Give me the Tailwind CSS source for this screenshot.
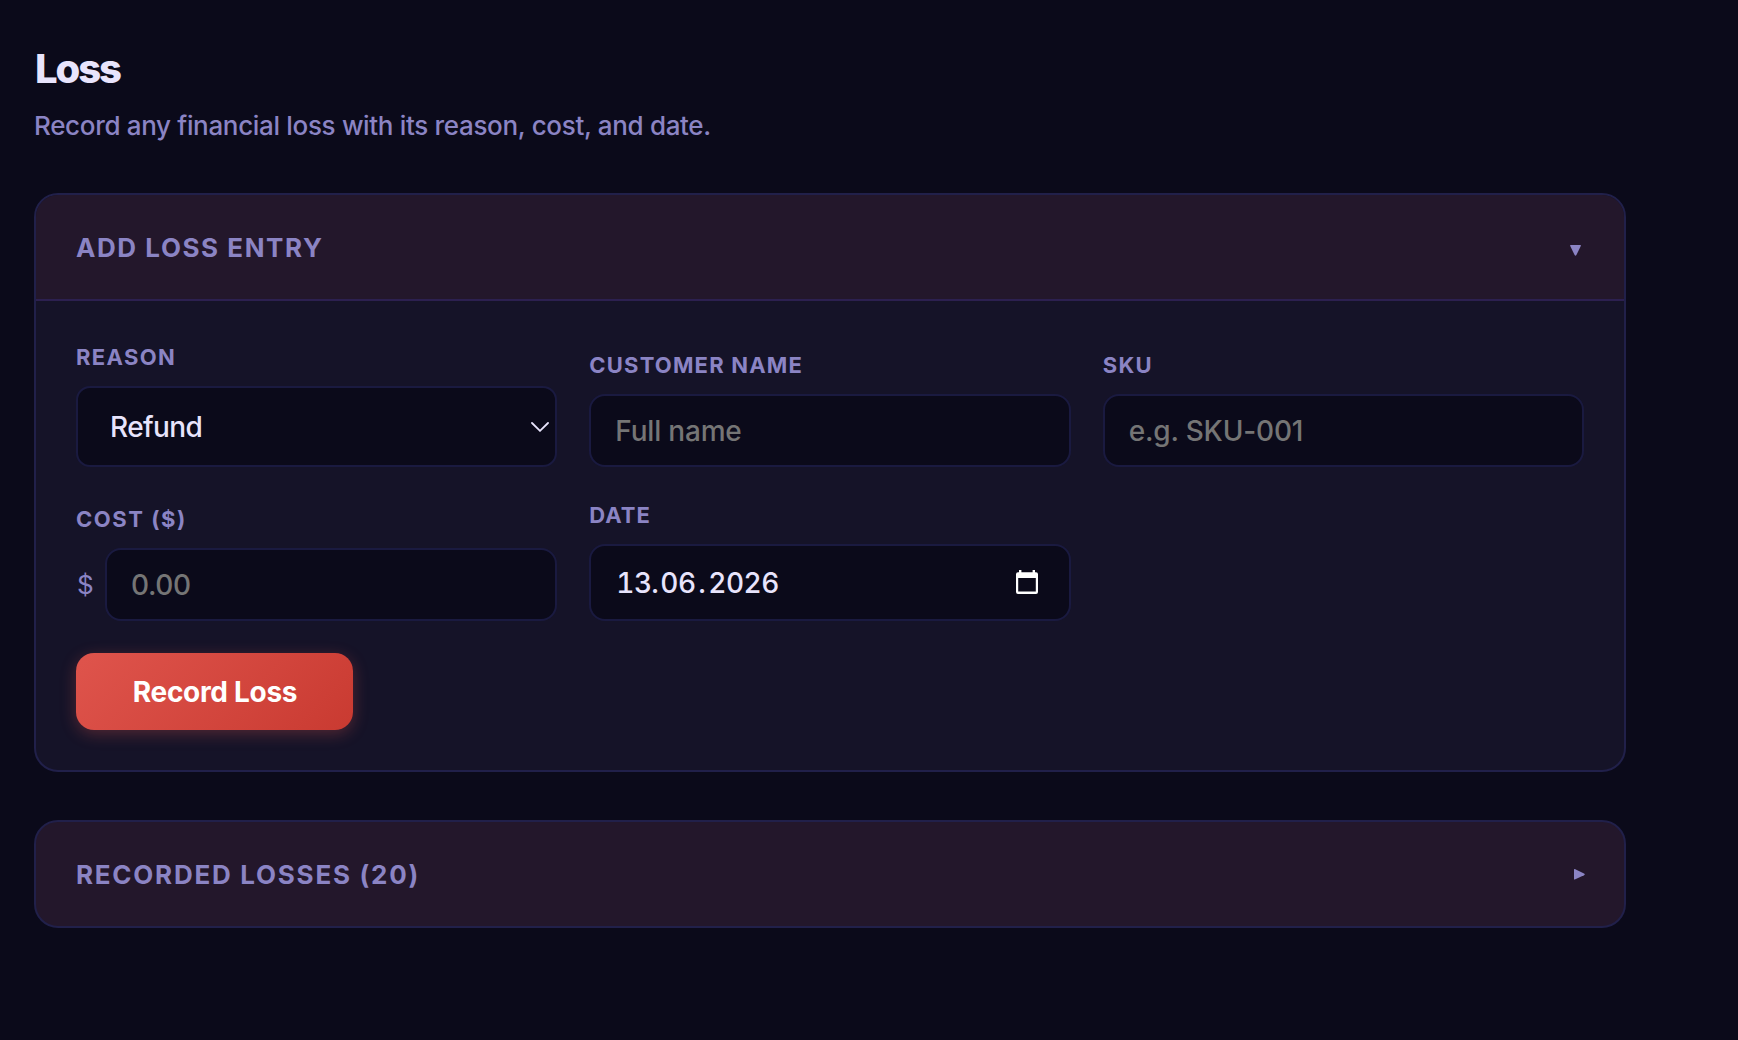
<!DOCTYPE html>
<html lang="en">
<head>
<meta charset="utf-8">
<title>Loss</title>
<script src="https://cdn.jsdelivr.net/npm/@tailwindcss/browser@4"></script>
</head>
<body class="min-h-screen bg-[#0b0a1a] font-['Inter',sans-serif] text-[#e8e4fc] antialiased">
<main class="w-[1626px] pl-[34px] pt-11">
  <h1 class="pl-px text-[40px] leading-[49px] font-extrabold tracking-[-2.1px]">Loss</h1>
  <p class="mt-3.5 mb-[49px] text-[26px] leading-[37px] font-medium tracking-[-0.33px] text-[#8b84c4]">Record any financial loss with its reason, cost, and date.</p>

  <section class="mb-12 overflow-hidden rounded-3xl border-2 border-[#21204a] bg-[#151328]">
    <header class="flex h-[106px] items-center justify-between border-b-2 border-[#2c2050] bg-[#23172b] pl-10 pr-[43px]">
      <h2 class="text-[26px] font-bold tracking-[1.56px] text-[#8b84c4]">ADD LOSS ENTRY</h2>
      <svg class="mt-1.5 h-[11px] w-[11px] fill-[#8b84c4]" viewBox="0 0 11 11"><path d="M.6 0h9.8q.8 0 .5.8L6.4 10q-.9 1.4-1.8 0L.1.8Q-.2 0 .6 0z"/></svg>
    </header>
    <form class="p-10">
      <div class="grid grid-cols-3 items-end gap-8">
        <div>
          <label class="mb-[13px] block text-[22px] leading-8 font-bold tracking-[1.35px] text-[#8b84c4]">REASON</label>
          <div class="flex h-[81px] items-center justify-between rounded-[14px] border-2 border-[#1a1a40] bg-[#0b0a1a] pl-8 pr-[6px]">
            <span class="text-[28px] font-medium tracking-[-0.6px]">Refund</span>
            <svg class="h-[10px] w-[18px] fill-none stroke-[#e8e4fc] stroke-[1.8]" viewBox="0 0 18 10"><path d="M1 1l8 7.8L17 1" stroke-linecap="round"/></svg>
          </div>
        </div>
        <div>
          <label class="mb-[13px] block text-[22px] leading-8 font-bold tracking-[1.18px] text-[#8b84c4]">CUSTOMER NAME</label>
          <input type="text" placeholder="Full name" class="block h-[73px] w-full rounded-[16px] border-2 border-[#1a1a40] bg-[#0b0a1a] px-6 text-[28px] font-medium tracking-[-0.2px] placeholder:text-[#757575]">
        </div>
        <div>
          <label class="mb-[13px] block text-[22px] leading-8 font-bold tracking-[1.35px] text-[#8b84c4]">SKU</label>
          <input type="text" placeholder="e.g. SKU-001" class="block h-[73px] w-full rounded-[16px] border-2 border-[#1a1a40] bg-[#0b0a1a] px-6 text-[28px] font-medium tracking-[-0.18px] placeholder:text-[#757575]">
        </div>
        <div>
          <label class="mb-[13px] block text-[22px] leading-8 font-bold tracking-[1.54px] text-[#8b84c4]">COST ($)</label>
          <div class="flex items-center">
            <span class="w-[29px] shrink-0 pl-px text-[26px] text-[#8b84c4]">$</span>
            <input type="text" placeholder="0.00" class="block h-[73px] w-full min-w-0 rounded-[16px] border-2 border-[#1a1a40] bg-[#0b0a1a] px-6 text-[28px] font-medium tracking-[-0.4px] placeholder:text-[#757575]">
          </div>
        </div>
        <div>
          <label class="mb-[13px] block text-[22px] leading-8 font-bold tracking-[1px] text-[#8b84c4]">DATE</label>
          <div class="flex h-[77px] items-center justify-between rounded-[16px] border-2 border-[#1a1a40] bg-[#0b0a1a] pl-[25px] pr-[31px]">
            <span class="flex text-[28px] font-medium tabular-nums tracking-[-0.5px]"><span class="w-[35px]">13</span><span class="w-[9px]">.</span><span class="w-[38px]">06</span><span class="w-[10px]">.</span><span>2026</span></span>
            <svg class="mb-0.5 h-6 w-[22px]" viewBox="0 0 22 24"><path fill="#fff" fill-rule="evenodd" d="M3 0h2.4v2.2h11.2V0H19v2.2h1q2 0 2 2V22q0 2-2 2H2q-2 0-2-2V4.200q0-2 2-2h1zM2.200 8v13.600h17.600V8z"/></svg>
          </div>
        </div>
      </div>
      <button type="button" class="mt-8 block h-[77px] w-[277px] rounded-[18px] bg-linear-135 from-[#df544c] to-[#c93a31] pl-px text-[28px] font-bold tracking-[-0.3px] text-white shadow-[0_4px_16px_rgba(224,85,77,0.3)]">Record Loss</button>
    </form>
  </section>

  <section class="overflow-hidden rounded-3xl border-2 border-[#21204a] bg-[#23172b]">
    <header class="flex h-[104px] items-center justify-between pl-10 pr-[39px]">
      <h2 class="text-[26px] font-bold tracking-[1.74px] text-[#8b84c4]">RECORDED LOSSES (20)</h2>
      <svg class="h-[11px] w-[11px] fill-[#8b84c4]" viewBox="0 0 11 11"><path d="M0 .6Q0-.2.8.1L10 4.400q1.600.900 0 1.800L.8 10.500Q0 10.800 0 10z"/></svg>
    </header>
  </section>
</main>
</body>
</html>
